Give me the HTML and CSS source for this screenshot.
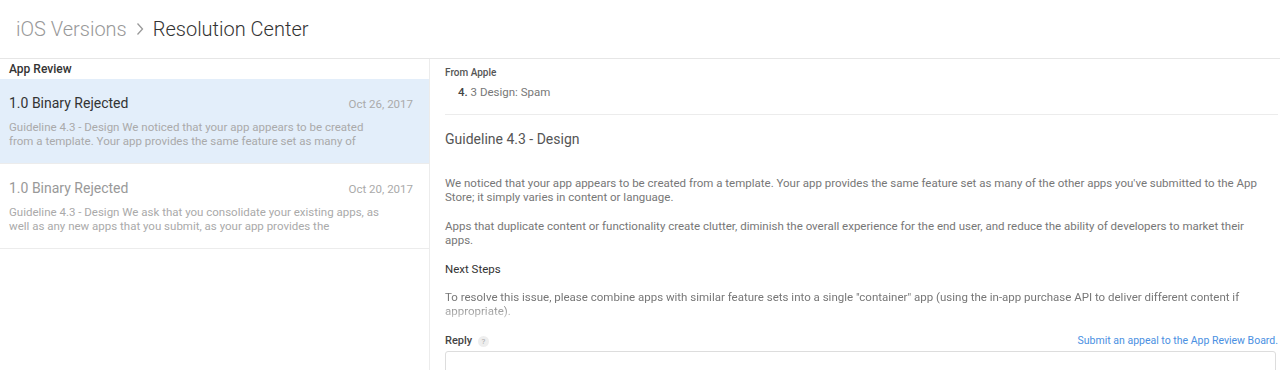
FILE: index.html
```html
<!DOCTYPE html>
<html lang="en">
<head>
<meta charset="UTF-8">
<title>Resolution Center</title>
<link rel="stylesheet" href="styles.css">
</head>
<body>

<div class="page-header">
    <span class="crumb">iOS Versions</span>
    <svg class="chevron" width="10" height="16" viewBox="0 0 10 16"><path d="M2.5 2.5 L7.5 8 L2.5 13.5" fill="none" stroke="#999" stroke-width="1.3"/></svg>
    <span class="current">Resolution Center</span>
</div>

<div class="panes">
    <div class="thread-list">
        <div class="list-head">App Review</div>
        <div class="thread selected">
            <div class="thread-top">
                <span class="thread-title">1.0 Binary Rejected</span>
                <span class="thread-date">Oct 26, 2017</span>
            </div>
            <p class="thread-text">Guideline 4.3 - Design We noticed that your app appears to be created from a template. Your app provides the same feature set as many of</p>
        </div>
        <div class="thread">
            <div class="thread-top">
                <span class="thread-title">1.0 Binary Rejected</span>
                <span class="thread-date">Oct 20, 2017</span>
            </div>
            <p class="thread-text">Guideline 4.3 - Design We ask that you consolidate your existing apps, as well as any new apps that you submit, as your app provides the</p>
        </div>
    </div>

    <div class="message">
        <div class="from">
            <div class="from-label">From Apple</div>
            <div class="reason"><b>4.</b> 3 Design: Spam</div>
        </div>
        <h3 class="msg-title">Guideline 4.3 - Design</h3>
        <div class="msg-body">
            <p>We noticed that your app appears to be created from a template. Your app provides the same feature set as many of the other apps you've submitted to the App Store; it simply varies in content or language.</p>
            <p>Apps that duplicate content or functionality create clutter, diminish the overall experience for the end user, and reduce the ability of developers to market their apps.</p>
            <h4>Next Steps</h4>
            <p class="fade">To resolve this issue, please combine apps with similar feature sets into a single "container" app (using the in-app purchase API to deliver different content if appropriate).</p>
        </div>
        <div class="reply-head">
            <span class="reply-label">Reply <span class="help">?</span></span>
            <a class="appeal" href="#">Submit an appeal to the App Review Board.</a>
        </div>
        <div class="reply-box"></div>
    </div>
</div>

</body>
</html>
```

FILE: styles.css
```css
body {
  margin: 0;
  font-family: Roboto, "Liberation Sans", Arial, sans-serif;
  background: #fff;
  color: #333;
  overflow: hidden;
}
.page-header {
  display: flex;
  align-items: center;
  height: 59px;
  padding-left: 16px;
  font-size: 20px;
  font-weight: 300;
  border-bottom: 1px solid #e6e6e6;
  box-sizing: border-box;
}
.crumb {
  color: #999;
}
.chevron {
  margin: 0 8px 0 8px;
}
.current {
  color: #333;
}
.panes {
  display: flex;
  height: 311px;
  overflow: hidden;
}
.thread-list {
  width: 429px;
  border-right: 1px solid #ececec;
}
.list-head {
  font-size: 12px;
  font-weight: 500;
  color: #333;
  padding: 3px 9px 0;
  height: 20px;
  box-sizing: border-box;
}
.thread {
  padding: 16px 16px 0 9px;
  height: 85px;
  box-sizing: border-box;
  border-bottom: 1px solid #ececec;
}
.thread.selected {
  background: #e3eefa;
}
.thread-top {
  display: flex;
  justify-content: space-between;
  align-items: baseline;
}
.thread-title {
  font-size: 14px;
  color: #999;
}
.selected .thread-title {
  color: #333;
}
.thread-date {
  font-size: 11.5px;
  color: #aaa;
}
.thread-text {
  margin: 9px 0 0;
  font-size: 11.5px;
  line-height: 14px;
  color: #aaa;
  padding-right: 30px;
}
.message {
  flex: 1;
  padding: 8px 2px 0 15px;
}
.from {
  border-bottom: 1px solid #ececec;
  padding-bottom: 15px;
}
.from-label {
  font-size: 10px;
  font-weight: 500;
  color: #555;
}
.reason {
  margin: 7px 0 0 13px;
  font-size: 11.5px;
  color: #777;
}
.reason b {
  color: #444;
  font-weight: 500;
}
.msg-title {
  margin: 16px 0 0;
  font-size: 14px;
  font-weight: normal;
  color: #555;
}
.msg-body {
  margin-top: 29px;
  font-size: 11.5px;
  line-height: 14px;
  color: #777;
  padding-right: 4px;
}
.msg-body p {
  margin: 0 0 15px;
}
.msg-body h4 {
  margin: 0 0 14px;
  font-size: 11.5px;
  font-weight: normal;
  color: #333;
}
.fade {
  -webkit-mask-image: linear-gradient(to bottom, #000 50%, rgba(0, 0, 0, 0.4) 100%);
  mask-image: linear-gradient(to bottom, #000 50%, rgba(0, 0, 0, 0.4) 100%);
}
.reply-head {
  display: flex;
  justify-content: space-between;
  align-items: baseline;
  margin-top: 16px;
}
.reply-label {
  font-size: 11px;
  font-weight: 500;
  color: #444;
}
.help {
  display: inline-block;
  width: 11px;
  height: 11px;
  line-height: 11px;
  margin-left: 3px;
  border-radius: 50%;
  background: #eee;
  color: #aaa;
  font-size: 8px;
  font-weight: normal;
  text-align: center;
}
.appeal {
  font-size: 10.5px;
  color: #4a90e2;
  text-decoration: none;
}
.reply-box {
  margin: 4px 2px 0 0;
  height: 40px;
  border: 1px solid #ddd;
  border-radius: 3px;
}
```
